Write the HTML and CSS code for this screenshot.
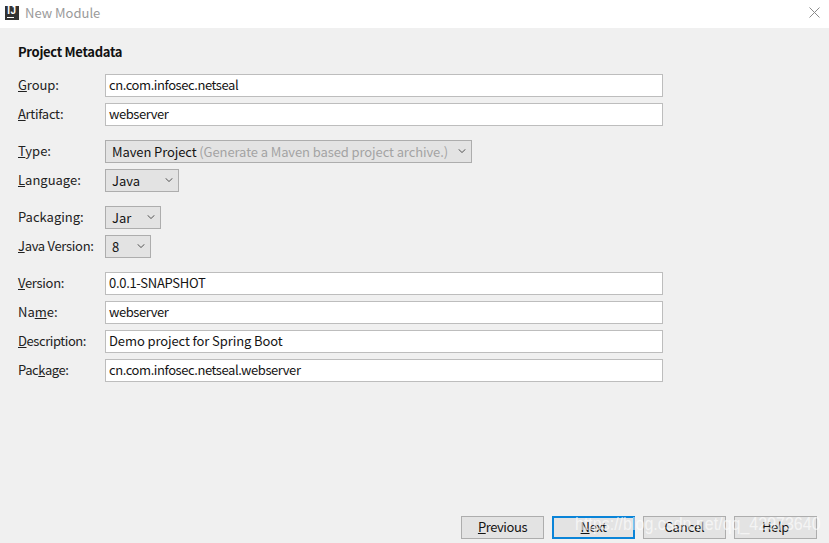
FILE: index.html
```html
<!DOCTYPE html>
<html lang="en">
<head>
<meta charset="utf-8">
<title>New Module</title>
<link rel="stylesheet" href="styles.css">
</head>
<body>
<div class="dialog">
  <header class="titlebar">
    <div class="logo"><span class="logo-text">IJ</span><span class="logo-bar"></span></div>
    <span class="title">New Module</span>
    <svg class="close" width="11" height="11" viewBox="0 0 11 11"><path d="M.5.5l10 10M10.5.5l-10 10" stroke="#8a8a8a" stroke-width="1" fill="none"/></svg>
  </header>
  <main class="content">
    <h1 class="heading">Project Metadata</h1>
    <section class="group">
      <div class="row"><label class="label ls-1"><u>G</u>roup:</label><div class="input ls-3">cn.com.infosec.netseal</div></div>
      <div class="row"><label class="label ls-2"><u>A</u>rtifact:</label><div class="input ls-3">webserver</div></div>
    </section>
    <section class="group">
      <div class="row"><label class="label"><u>T</u>ype:</label><div class="select w-type"><span class="ls-1">Maven Project <span class="hint">(Generate a Maven based project archive.)</span></span><svg class="chev" width="8" height="4" viewBox="0 0 8 4"><path d="M.5.2l3.5 3.3L7.5.2" stroke="#555" fill="none"/></svg></div></div>
      <div class="row"><label class="label"><u>L</u>anguage:</label><div class="select w-lang"><span>Java</span><svg class="chev" width="8" height="4" viewBox="0 0 8 4"><path d="M.5.2l3.5 3.3L7.5.2" stroke="#555" fill="none"/></svg></div></div>
    </section>
    <section class="group">
      <div class="row"><label class="label">Packa<u>g</u>ing:</label><div class="select w-pack"><span>Jar</span><svg class="chev" width="8" height="4" viewBox="0 0 8 4"><path d="M.5.2l3.5 3.3L7.5.2" stroke="#555" fill="none"/></svg></div></div>
      <div class="row"><label class="label ls-2"><u>J</u>ava Version:</label><div class="select w-ver"><span>8</span><svg class="chev" width="8" height="4" viewBox="0 0 8 4"><path d="M.5.2l3.5 3.3L7.5.2" stroke="#555" fill="none"/></svg></div></div>
    </section>
    <section class="group">
      <div class="row"><label class="label ls-2"><u>V</u>ersion:</label><div class="input ls-2">0.0.1-SNAPSHOT</div></div>
      <div class="row"><label class="label">Na<u>m</u>e:</label><div class="input ls-3">webserver</div></div>
      <div class="row"><label class="label ls-3"><u>D</u>escription:</label><div class="input ls-1">Demo project for Spring Boot</div></div>
      <div class="row"><label class="label ls-3">Pac<u>k</u>age:</label><div class="input ls-3">cn.com.infosec.netseal.webserver</div></div>
    </section>
  </main>
  <footer class="footer">
    <button class="btn ls-3"><u>P</u>revious</button>
    <button class="btn btn-default ls-3"><u>N</u>ext</button>
    <button class="btn ls-1">Cancel</button>
    <button class="btn ls-2">Help</button>
  </footer>
  <div class="watermark">https://blog.csdn.net/qq_42973640</div>
</div>
</body>
</html>
```
FILE: styles.css
```css
* { box-sizing: border-box; }
html, body { margin: 0; padding: 0; }
body {
  width: 829px;
  height: 543px;
  overflow: hidden;
  font-family: "Noto Sans CJK SC", "Noto Sans", sans-serif;
  font-size: 13px;
  color: #141414;
}
.ls-1 { letter-spacing: -0.1px; }
.ls-2 { letter-spacing: -0.3px; }
.ls-3 { letter-spacing: -0.43px; }
.dialog {
  position: relative;
  width: 829px;
  height: 543px;
  background: #f0f0f0;
  display: flex;
  flex-direction: column;
}
.titlebar {
  height: 28px;
  background: #fff;
  display: flex;
  align-items: center;
  padding: 0 9px 0 5px;
}
.logo {
  width: 14px;
  height: 14px;
  background: #333;
  color: #fff;
  display: flex;
  flex-direction: column;
  align-items: center;
  overflow: hidden;
  margin-bottom: 2px;
}
.logo-text {
  font-family: "Liberation Sans", sans-serif;
  font-size: 10px;
  font-weight: 700;
  line-height: 10px;
  letter-spacing: 0.5px;
}
.logo-bar {
  width: 7px;
  height: 1px;
  background: #fff;
  margin: 1px auto 0 2px;
}
.title {
  margin-left: 6px;
  color: #9a9a9a;
  font-size: 13px;
  line-height: 18px;
  margin-bottom: 2px;
  flex: 1;
}
.close { display: block; margin-bottom: 4px; }
.content {
  flex: 1;
  padding: 15px 0 0 18px;
}
.heading {
  margin: 0;
  height: 31px;
  font-size: 13px;
  font-weight: 700;
  line-height: 18px;
  letter-spacing: -0.3px;
  color: #111;
}
.group {
  display: flex;
  flex-direction: column;
  gap: 6px;
  margin-bottom: 14px;
}
.row {
  display: flex;
  align-items: center;
  height: 23px;
}
.label {
  width: 87px;
  flex: none;
  color: #222;
  line-height: 20px;
  margin-bottom: 2px;
}
.input {
  width: 558px;
  height: 23px;
  background: #fff;
  border: 1px solid #bdbdbd;
  padding: 0 3px;
  line-height: 20px;
  white-space: nowrap;
}
.select {
  height: 23px;
  background: #e3e3e3;
  border: 1px solid #adadad;
  display: flex;
  align-items: center;
  justify-content: space-between;
  padding: 0 5px 0 6px;
  line-height: 20px;
  white-space: nowrap;
}
.w-type { width: 367px; }
.w-lang { width: 74px; }
.w-pack { width: 56px; }
.w-ver { width: 46px; }
.hint { color: #a3a3a3; }
.chev { flex: none; margin-bottom: 2px; }
.footer {
  display: flex;
  justify-content: flex-end;
  gap: 8px;
  padding: 0 12px 4px 0;
}
.btn {
  width: 83px;
  height: 23px;
  padding: 0 0 2px;
  background: #e3e3e3;
  border: 1px solid #adadad;
  font-family: inherit;
  font-size: 13px;
  color: #141414;
  line-height: 18px;
}
.btn-default {
  border: 2px solid #0a84d8;
}
.watermark {
  position: absolute;
  left: 575px;
  top: 515px;
  font-family: "Liberation Sans", sans-serif;
  font-size: 16px;
  line-height: 18px;
  color: rgba(255, 255, 255, 0.65);
  white-space: nowrap;
  transform: scaleY(1.15);
}
```
